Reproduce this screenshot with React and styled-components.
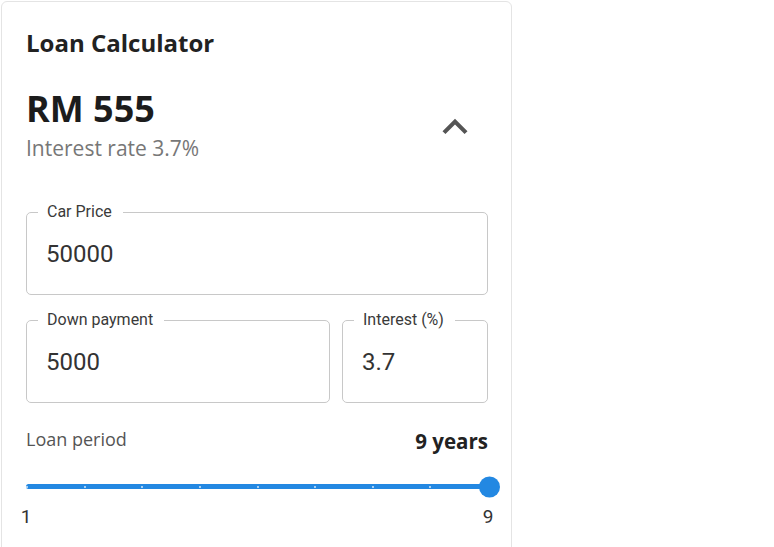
import styled, { createGlobalStyle } from "styled-components";

const GlobalStyle = createGlobalStyle`
    body {
        margin: 0;
        background: #ffffff;
        overflow: hidden;
    }
`

const Card = styled.section`
    box-sizing: border-box;
    width: 511px;
    margin: 1px 0 0 1px;
    padding: 27px 23px 40px 24px;
    border: 1px solid #e4e4e4;
    border-radius: 6px;
    background: #ffffff;
    font-family: "Open Sans", "Noto Sans", sans-serif;
    color: #222222;
`

const Title = styled.h2`
    margin: 0;
    font-size: 24px;
    line-height: 1.2;
    font-weight: 700;
    color: #222222;
`

const Header = styled.div`
    display: flex;
    align-items: center;
    justify-content: space-between;
    margin-top: 29px;
`

const Amount = styled.div`
    font-size: 36px;
    line-height: 1.2;
    font-weight: 700;
    color: #1c1c1c;
`

const Rate = styled.div`
    margin-top: 6px;
    font-size: 21px;
    line-height: 1.2;
    color: #777777;
`

const ToggleButton = styled.button`
    display: flex;
    align-items: center;
    justify-content: center;
    width: 50px;
    height: 50px;
    margin: 6px 8px 0 0;
    padding: 0;
    border: none;
    border-radius: 50%;
    background: transparent;
    color: #555555;
    cursor: pointer;
`

const Fields = styled.div`
    display: grid;
    grid-template-columns: ${(p) => p.$columns};
    column-gap: 12px;
    margin-top: ${(p) => p.$top}px;
`

const Field = styled.fieldset`
    min-width: 0;
    margin: 0;
    padding: 0 11px 8px 11px;
    border: 1px solid #c8c8c8;
    border-radius: 5px;
`

const Legend = styled.legend`
    padding: 0 11px 0 9px;
    font-family: Roboto, "Liberation Sans", sans-serif;
    font-size: 16px;
    line-height: 18px;
    color: #3a3a3a;
`

const Input = styled.input`
    box-sizing: border-box;
    display: block;
    width: 100%;
    height: 65px;
    padding: 0 8px;
    border: none;
    outline: none;
    background: transparent;
    font-family: Roboto, "Liberation Sans", sans-serif;
    font-size: 24px;
    color: #333333;
`

const PeriodRow = styled.div`
    display: flex;
    align-items: flex-start;
    justify-content: space-between;
    margin-top: 25px;
`

const PeriodLabel = styled.span`
    font-size: 18px;
    line-height: 1.3;
    color: #555555;
`

const PeriodValue = styled.span`
    font-size: 20.5px;
    line-height: 1.3;
    font-weight: 700;
    color: #222222;
`

const Slider = styled.div`
    position: relative;
    display: flex;
    align-items: center;
    width: calc(100% + 1px);
    height: 22px;
    margin-top: 21px;
`

const Track = styled.div`
    display: flex;
    align-items: center;
    justify-content: space-between;
    width: 100%;
    height: 5px;
    border-radius: 3px;
    background: #2388e2;
`

const Tick = styled.span`
    width: 2px;
    height: 2px;
    border-radius: 1px;
    background: rgba(255, 255, 255, 0.8);
`

const Thumb = styled.span`
    position: absolute;
    right: -11px;
    top: 50%;
    width: 21px;
    height: 21px;
    border-radius: 50%;
    background: #2388e2;
    transform: translateY(-50%);
`

const Marks = styled.div`
    display: flex;
    justify-content: space-between;
    width: 100%;
    margin-top: 7px;
`

const Mark = styled.span`
    display: flex;
    justify-content: center;
    width: 0;
    font-family: Roboto, "Liberation Sans", sans-serif;
    font-size: 19px;
    color: #333333;
`

const ChevronUp = () => (
    <svg width="50" height="50" viewBox="0 0 24 24" fill="currentColor">
        <path d="M12 8l-6 6 1.41 1.41L12 10.83l4.59 4.58L18 14z" />
    </svg>
)

const years = [1, 2, 3, 4, 5, 6, 7, 8, 9];

const App = () => {
    return (
        <>
            <GlobalStyle />
            <Card>
                <Title>Loan Calculator</Title>
                <Header>
                    <div>
                        <Amount>RM 555</Amount>
                        <Rate>Interest rate 3.7%</Rate>
                    </div>
                    <ToggleButton aria-label="collapse">
                        <ChevronUp />
                    </ToggleButton>
                </Header>

                <Fields $columns="1fr" $top={42}>
                    <Field>
                        <Legend>Car Price</Legend>
                        <Input defaultValue="50000" />
                    </Field>
                </Fields>
                <Fields $columns="304px 1fr" $top={16}>
                    <Field>
                        <Legend>Down payment</Legend>
                        <Input defaultValue="5000" />
                    </Field>
                    <Field>
                        <Legend>Interest (%)</Legend>
                        <Input defaultValue="3.7" />
                    </Field>
                </Fields>

                <PeriodRow>
                    <PeriodLabel>Loan period</PeriodLabel>
                    <PeriodValue>9 years</PeriodValue>
                </PeriodRow>
                <Slider>
                    <Track>
                        {years.map((y) => <Tick key={y} />)}
                    </Track>
                    <Thumb />
                </Slider>
                <Marks>
                    <Mark>1</Mark>
                    <Mark>9</Mark>
                </Marks>
            </Card>
        </>
    )
}

export default App
